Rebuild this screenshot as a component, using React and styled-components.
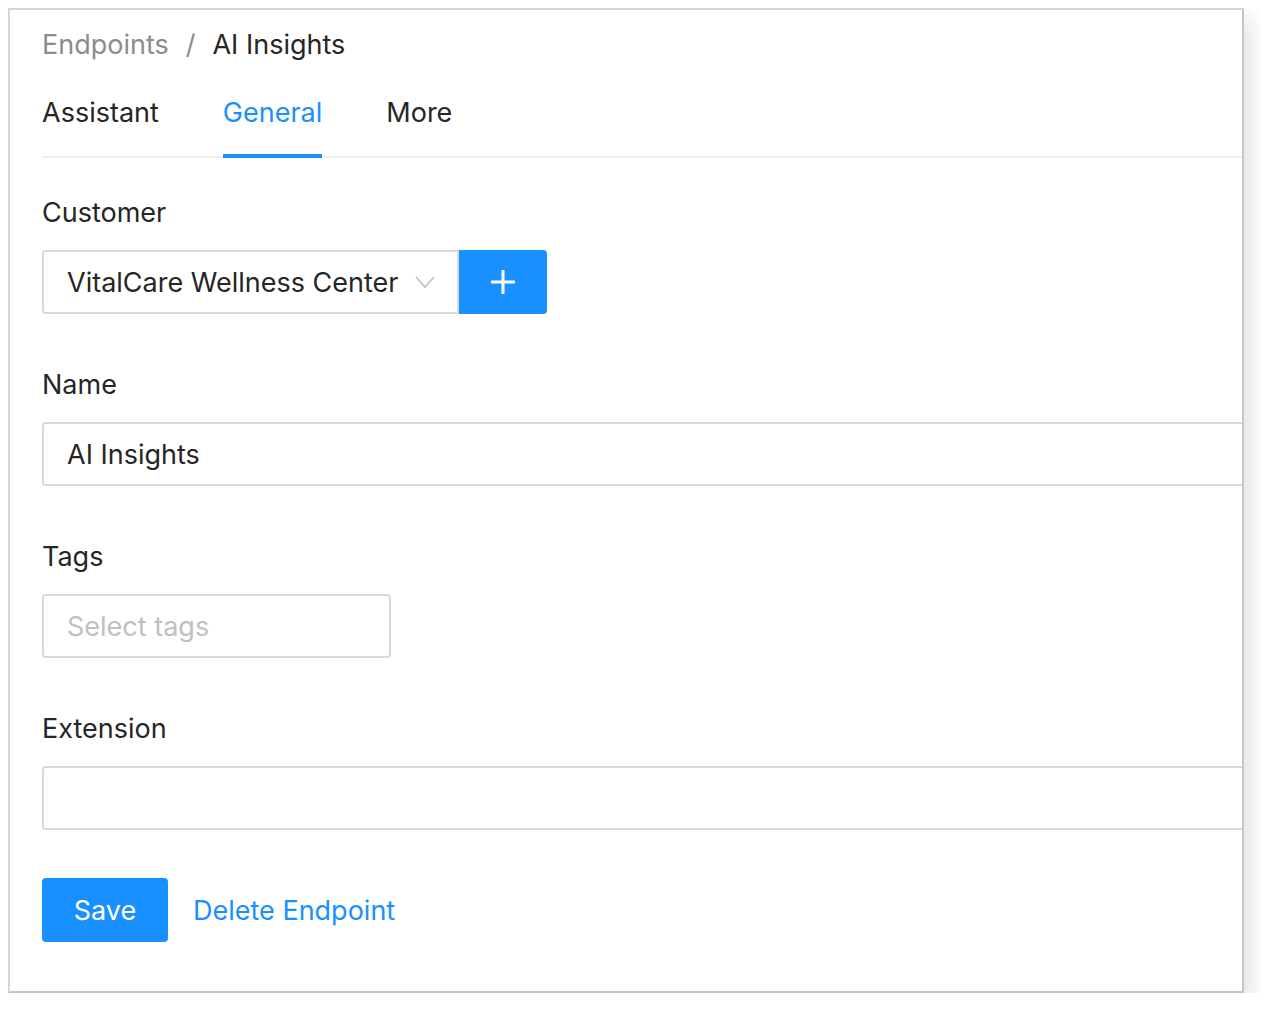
import React from 'react';
import styled, { createGlobalStyle } from 'styled-components';

const GlobalStyle = createGlobalStyle`
  body {
    margin: 8px;
    background: #fff;
    font-family: Inter, "Noto Sans", "Liberation Sans", sans-serif;
    color: #262626;
  }
`;

const Card = styled.div`
  width: 1236px;
  box-sizing: border-box;
  border: 2px solid #d6d6d6;
  border-right-color: #c6c6c6;
  border-bottom-color: #c6c6c6;
  box-shadow: 6px 10px 22px rgba(0, 0, 0, 0.13);
  background: #fff;
  overflow: hidden;
  padding: 15px 0 49px 32px;
`;

const Breadcrumb = styled.div`
  display: flex;
  align-items: center;
  font-size: 27px;
  line-height: 40px;
`;

const Crumb = styled.span`
  color: ${(p) => (p.current ? '#262626' : '#8c8c8c')};
`;

const Sep = styled.span`
  color: #8c8c8c;
  margin: 0 17px;
`;

const TabNav = styled.div`
  display: flex;
  gap: 64px;
  border-bottom: 2px solid #f0f0f0;
`;

const Tab = styled.div`
  position: relative;
  padding: 28px 0 23px;
  font-size: 27px;
  line-height: 40px;
  color: ${(p) => (p.active ? '#1890ff' : '#262626')};
  &::after {
    content: '';
    display: ${(p) => (p.active ? 'block' : 'none')};
    position: absolute;
    left: 0;
    right: 0;
    bottom: -2px;
    height: 4px;
    background: #1890ff;
  }
`;

const Form = styled.div`
  margin-top: 34px;
  display: flex;
  flex-direction: column;
`;

const Field = styled.div`
  margin-bottom: 50px;
`;

const Label = styled.div`
  font-size: 27px;
  line-height: 42px;
  margin-bottom: 16px;
  color: #262626;
`;

const Group = styled.div`
  display: flex;
`;

const Box = styled.div`
  box-sizing: border-box;
  height: 64px;
  width: ${(p) => p.width || 'calc(100% + 8px)'};
  border: 2px solid #d9d9d9;
  border-radius: ${(p) => (p.attached ? '4px 0 0 4px' : '4px')};
  display: flex;
  align-items: center;
  padding: 0 22px 0 23px;
  font-size: 27px;
  color: ${(p) => (p.placeholder ? '#bfbfbf' : '#262626')};
  background: #fff;
`;

const BoxText = styled.span`
  flex: 1;
  white-space: nowrap;
`;

const AddButton = styled.button`
  width: 88px;
  height: 64px;
  border: none;
  border-radius: 0 4px 4px 0;
  background: #1890ff;
  display: flex;
  align-items: center;
  justify-content: center;
  padding: 0;
`;

const Actions = styled.div`
  display: flex;
  align-items: center;
  gap: 25px;
  margin-top: -2px;
`;

const SaveButton = styled.button`
  height: 64px;
  width: 126px;
  border: none;
  border-radius: 4px;
  background: #1890ff;
  color: #fff;
  font-family: inherit;
  font-size: 27px;
`;

const LinkButton = styled.span`
  color: #1890ff;
  font-size: 27px;
`;

const Chevron = () => (
  <svg width="20" height="12" viewBox="0 0 20 12" fill="none">
    <path d="M1 1l9 10 9-10" stroke="#bfbfbf" strokeWidth="1.6" />
  </svg>
);

const Plus = () => (
  <svg width="24" height="24" viewBox="0 0 24 24" fill="none">
    <path d="M12 1v22M1 12h22" stroke="#fff" strokeWidth="3" strokeLinecap="round" />
  </svg>
);

export default function App() {
  return (
    <>
      <GlobalStyle />
      <Card>
        <Breadcrumb>
          <Crumb>Endpoints</Crumb>
          <Sep>/</Sep>
          <Crumb current>AI Insights</Crumb>
        </Breadcrumb>
        <TabNav>
          <Tab>Assistant</Tab>
          <Tab active>General</Tab>
          <Tab>More</Tab>
        </TabNav>
        <Form>
          <Field>
            <Label>Customer</Label>
            <Group>
              <Box width="417px" attached>
                <BoxText>VitalCare Wellness Center</BoxText>
                <Chevron />
              </Box>
              <AddButton>
                <Plus />
              </AddButton>
            </Group>
          </Field>
          <Field>
            <Label>Name</Label>
            <Box>
              <BoxText>AI Insights</BoxText>
            </Box>
          </Field>
          <Field>
            <Label>Tags</Label>
            <Box width="349px" placeholder>
              <BoxText>Select tags</BoxText>
            </Box>
          </Field>
          <Field>
            <Label>Extension</Label>
            <Box />
          </Field>
          <Actions>
            <SaveButton>Save</SaveButton>
            <LinkButton>Delete Endpoint</LinkButton>
          </Actions>
        </Form>
      </Card>
    </>
  );
}
